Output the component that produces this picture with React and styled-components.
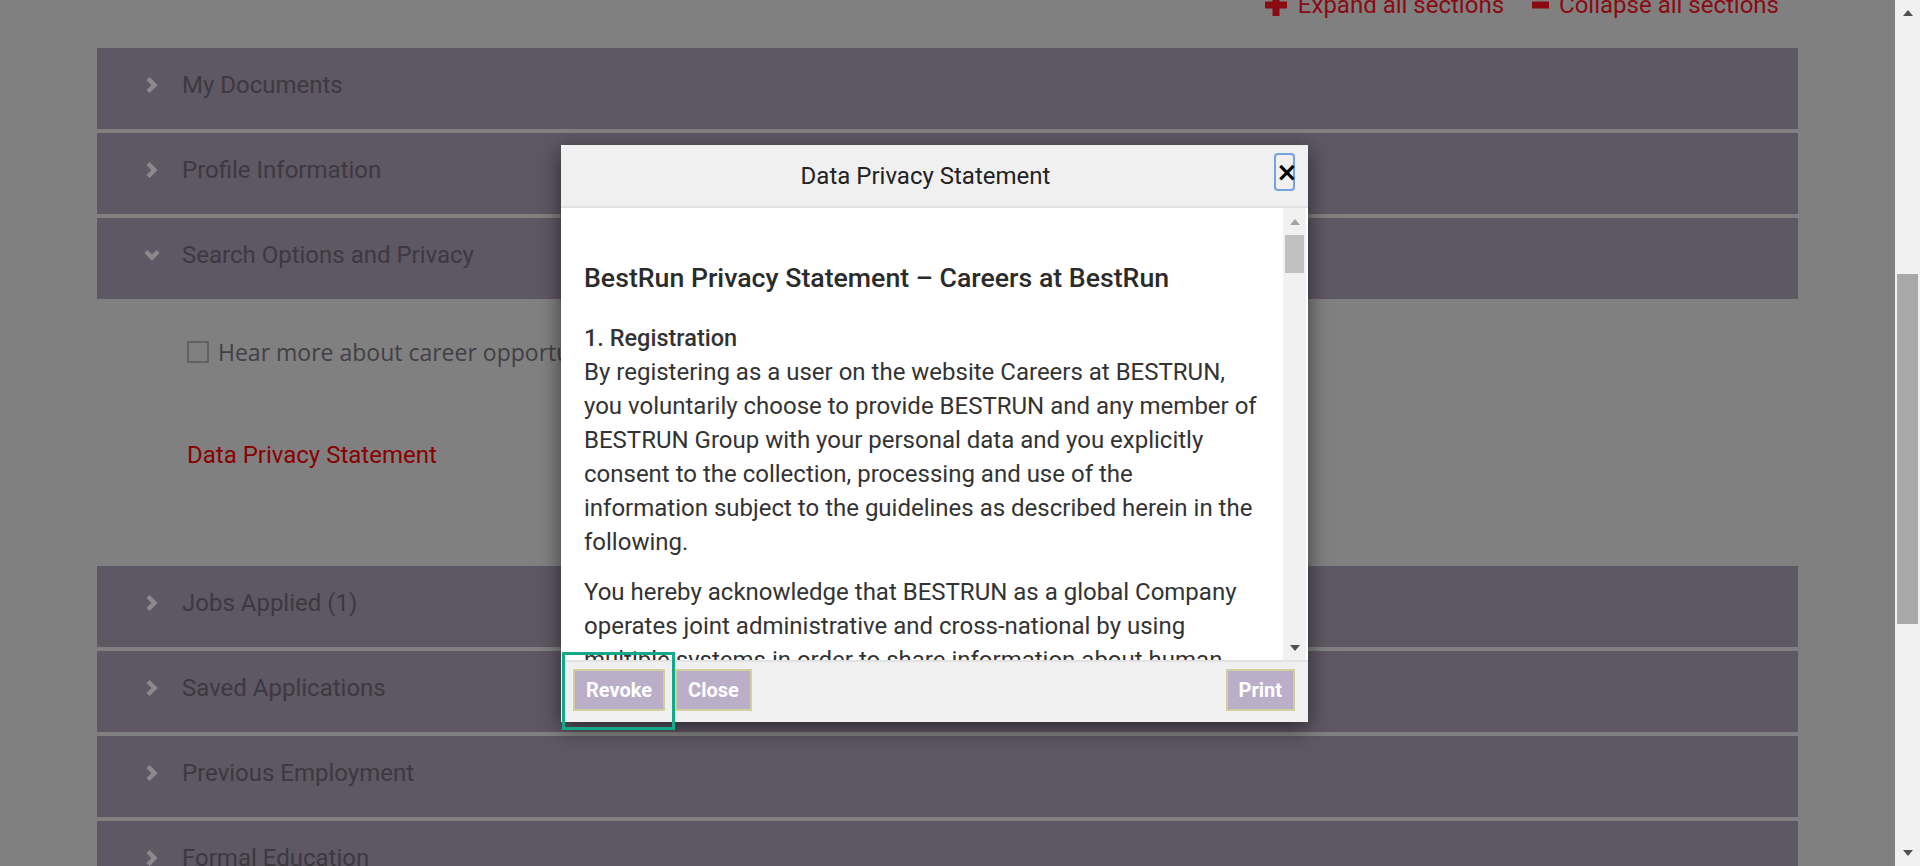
import React from 'react';
import styled, { createGlobalStyle } from 'styled-components';

const GlobalStyle = createGlobalStyle`
    html, body {
        margin: 0;
        padding: 0;
        height: 866px;
        overflow: hidden;
        font-family: Roboto, "Liberation Sans", sans-serif;
    }
    *{ box-sizing: border-box; }
`;

const Page = styled.div`
    position: relative;
    display: flex;
    width: 1920px;
    height: 866px;
    overflow: hidden;
`;

const Main = styled.main`
    flex: 1;
    background: #808080;
    padding: 0 97px;
    overflow: hidden;
`;

const Toolbar = styled.div`
    display: flex;
    justify-content: flex-end;
    align-items: center;
    gap: 28px;
    height: 28px;
    margin: -9px 0 29px;
    padding-right: 19px;
`;

const ToolLink = styled.a`
    display: flex;
    align-items: center;
    gap: ${p => p.$gap}px;
    color: #8a0a12;
    font-size: 24px;
    line-height: 28px;
    text-decoration: none;
`;

const Section = styled.div`
    display: flex;
    align-items: center;
    height: 81px;
    margin-bottom: 4px;
    padding: 0 0 8px 47px;
    background: #5e5764;
    color: #3d3941;
    font-size: 24px;
    span{
        margin-left: 22px;
    }
`;

const Panel = styled.div`
    height: 259px;
    margin: -4px 0 8px;
    padding: 37px 0 0 90px;
`;

const CheckRow = styled.label`
    display: flex;
    align-items: center;
    gap: 9px;
    height: 32px;
    font-family: "Open Sans", sans-serif;
    font-size: 23px;
    color: #404046;
    white-space: nowrap;
`;

const Box = styled.span`
    width: 22px;
    height: 22px;
    border: 2px solid #626262;
`;

const PrivacyLink = styled.a`
    display: block;
    margin-top: 71px;
    line-height: 32px;
    font-size: 24px;
    color: #8a0000;
    text-decoration: none;
`;

const Scrollbar = styled.div`
    display: flex;
    flex-direction: column;
    width: ${p => p.$width}px;
    background: #f1f1f1;
`;

const ArrowBox = styled.div`
    display: flex;
    justify-content: center;
    align-items: center;
    height: ${p => p.$h}px;
    &::before{
        content: '';
        border-left: 5px solid transparent;
        border-right: 5px solid transparent;
        ${p => p.$down
            ? `border-top: 6px solid ${p.$color};`
            : `border-bottom: 6px solid ${p.$color};`}
    }
`;

const Track = styled.div`
    flex: 1;
    padding: ${p => p.$offset}px 2px 0;
`;

const Thumb = styled.div`
    height: ${p => p.$h}px;
    background: ${p => p.$color};
`;

const Modal = styled.div`
    position: absolute;
    left: 561px;
    top: 145px;
    width: 747px;
    display: flex;
    flex-direction: column;
    background: #f0f0f0;
    box-shadow: 0 6px 20px rgba(0,0,0,0.55);
`;

const ModalHeader = styled.div`
    position: relative;
    display: flex;
    justify-content: center;
    align-items: center;
    height: 63px;
    padding-right: 18px;
    border-bottom: 2px solid #e2e2e2;
    font-size: 24px;
    font-weight: 400;
    color: #222;
`;

const CloseX = styled.button`
    position: absolute;
    right: 13px;
    top: 8px;
    width: 21px;
    height: 38px;
    padding: 0;
    border: 2px solid #74a3e0;
    border-radius: 4px;
    background: transparent;
    font-family: "DejaVu Sans", sans-serif;
    font-size: 26px;
    font-weight: 700;
    line-height: 30px;
    color: #000;
`;

const ModalBody = styled.div`
    display: flex;
    height: 452px;
    background: #fff;
    padding-right: 2px;
`;

const Content = styled.div`
    flex: 1;
    overflow: hidden;
    padding: 53px 23px 0;
    color: #333;
    h2{
        margin: 0 0 26px;
        font-size: 26.7px;
        font-weight: 500;
        line-height: 34px;
        color: #2b2b2b;
    }
    h3{
        margin: 0;
        font-size: 23.5px;
        font-weight: 500;
        line-height: 34px;
    }
    p{
        margin: 0 0 16px;
        font-size: 24px;
        line-height: 34px;
        white-space: nowrap;
    }
`;

const ModalFooter = styled.div`
    display: flex;
    gap: 10px;
    height: 62px;
    padding: 7px 13px 0 12px;
    border-top: 2px solid #e2e2e2;
    background: #f0f0f0;
`;

const FooterButton = styled.button`
    position: relative;
    height: 42px;
    padding: 0 ${p => p.$pad}px;
    margin-left: ${p => (p.$right ? 'auto' : '0')};
    border: 2px solid #d2cf9f;
    background: #bbaec8;
    color: #fff;
    font-family: Roboto, sans-serif;
    font-size: 20px;
    font-weight: 700;
    ${p => p.$focused && `
        &::after{
            content: '';
            position: absolute;
            top: -19px;
            left: -13px;
            right: -12px;
            bottom: -21px;
            border: 3px solid #15a98a;
        }
    `}
`;

const sections = [
    { title: 'My Documents' },
    { title: 'Profile Information' },
    { title: 'Search Options and Privacy', open: true },
    { title: 'Jobs Applied (1)' },
    { title: 'Saved Applications' },
    { title: 'Previous Employment' },
    { title: 'Formal Education' },
    { title: 'Languages' },
];

function Chevron({ open }){
    return (
        <svg width="16" height="18" viewBox="0 0 16 18">
            <polyline
                points={open ? '2,5.5 8,11.5 14,5.5' : '4,2.5 10.5,9 4,15.5'}
                fill="none"
                stroke="#8a8a8a"
                strokeWidth="4.5"
            />
        </svg>
    );
}

function PlusIcon(){
    return (
        <svg width="22" height="22" viewBox="0 0 22 22">
            <rect x="7.5" y="0" width="7" height="22" fill="#8a0a12" />
            <rect x="0" y="7.5" width="22" height="7" fill="#8a0a12" />
        </svg>
    );
}

function MinusIcon(){
    return (
        <svg width="17" height="22" viewBox="0 0 17 22">
            <rect x="0" y="7.5" width="17" height="7" fill="#8a0a12" />
        </svg>
    );
}

export default function App(){
    return(
        <><GlobalStyle />
        <Page>
            <Main>
                <Toolbar>
                    <ToolLink $gap={11}><PlusIcon />Expand all sections</ToolLink>
                    <ToolLink $gap={10}><MinusIcon />Collapse all sections</ToolLink>
                </Toolbar>
                {sections.map(s => (
                    <React.Fragment key={s.title}>
                        <Section>
                            <Chevron open={s.open} />
                            <span>{s.title}</span>
                        </Section>
                        {s.open && (
                            <Panel>
                                <CheckRow><Box />Hear more about career opportunities</CheckRow>
                                <PrivacyLink>Data Privacy Statement</PrivacyLink>
                            </Panel>
                        )}
                    </React.Fragment>
                ))}
            </Main>
            <Scrollbar $width={25}>
                <ArrowBox $h={26} $color="#505050" />
                <Track $offset={248}><Thumb $h={350} $color="#a8a8a8" /></Track>
                <ArrowBox $h={26} $down $color="#505050" />
            </Scrollbar>

            <Modal>
                <ModalHeader>
                    Data Privacy Statement
                    <CloseX>×</CloseX>
                </ModalHeader>
                <ModalBody>
                    <Content>
                        <h2>BestRun Privacy Statement – Careers at BestRun</h2>
                        <h3>1. Registration</h3>
                        <p>
                            By registering as a user on the website Careers at BESTRUN,<br />
                            you voluntarily choose to provide BESTRUN and any member of<br />
                            BESTRUN Group with your personal data and you explicitly<br />
                            consent to the collection, processing and use of the<br />
                            information subject to the guidelines as described herein in the<br />
                            following.
                        </p>
                        <p>
                            You hereby acknowledge that BESTRUN as a global Company<br />
                            operates joint administrative and cross-national by using<br />
                            multiple systems in order to share information about human<br />
                            resources and to process them for recruiting purposes.
                        </p>
                    </Content>
                    <Scrollbar $width={23}>
                        <ArrowBox $h={27} $color="#a3a3a3" />
                        <Track $offset={0}><Thumb $h={38} $color="#c1c1c1" /></Track>
                        <ArrowBox $h={24} $down $color="#505050" />
                    </Scrollbar>
                </ModalBody>
                <ModalFooter>
                    <FooterButton $pad={11} $focused>Revoke</FooterButton>
                    <FooterButton $pad={11}>Close</FooterButton>
                    <FooterButton $pad={11} $right>Print</FooterButton>
                </ModalFooter>
            </Modal>
        </Page>
        </>
    );
}
